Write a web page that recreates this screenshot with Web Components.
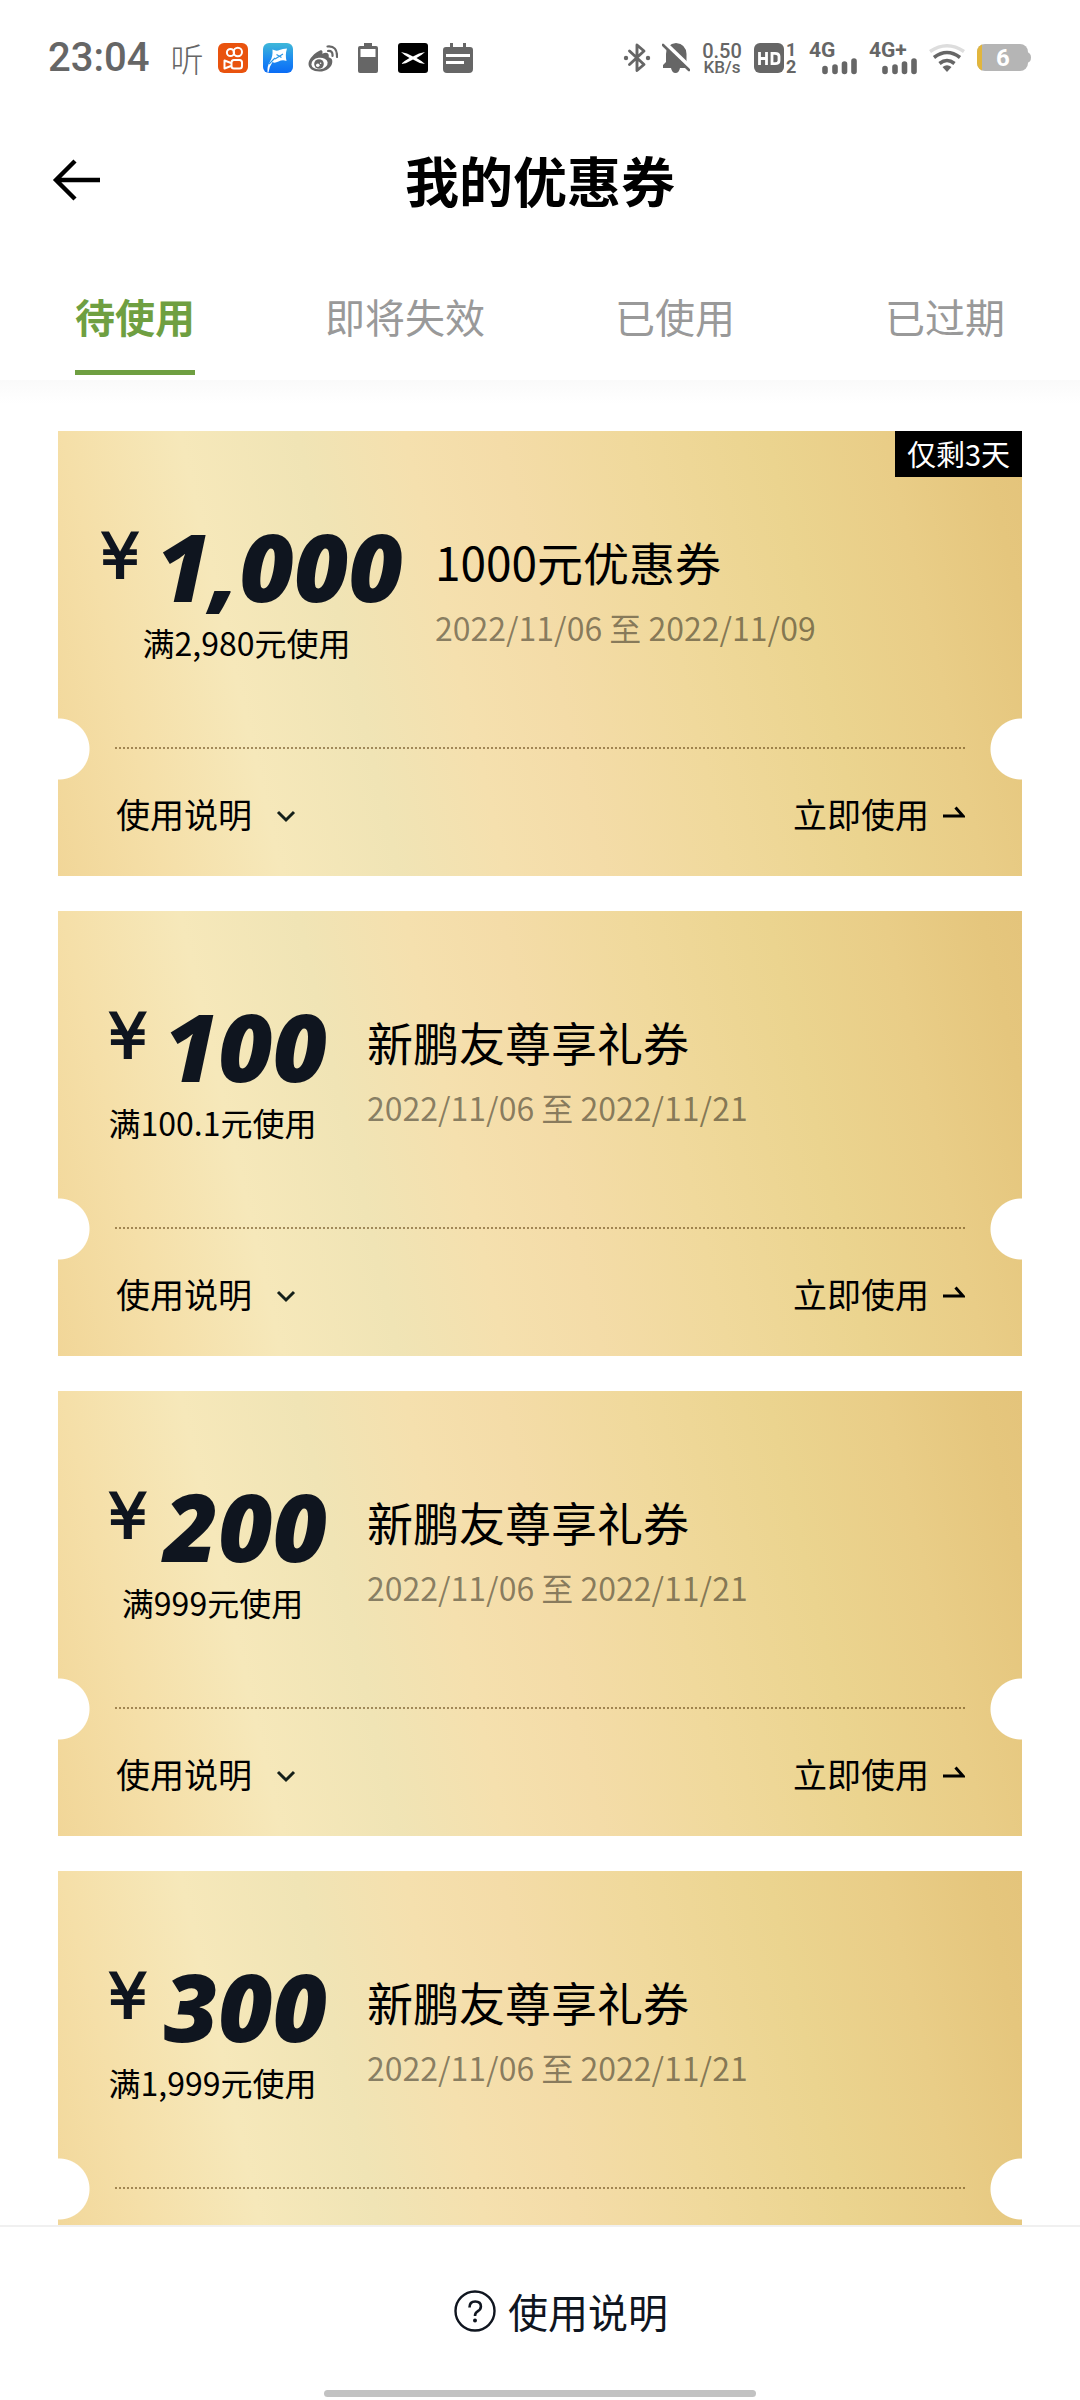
<!DOCTYPE html>
<html lang="zh-CN">
<head>
<meta charset="utf-8">
<meta name="viewport" content="width=device-width, initial-scale=1">
<title>我的优惠券</title>
<style>
  html, body { margin: 0; height: 100%; background: #fff; }
  body { font-family: "Noto Sans CJK SC", "Noto Sans", sans-serif; color: #000; }
</style>
</head>
<body>
<coupon-page>
  <status-bar slot="top"></status-bar>
  <page-header slot="top">我的优惠券</page-header>
  <tab-strip slot="top">
    <tab-item selected>待使用</tab-item>
    <tab-item>即将失效</tab-item>
    <tab-item>已使用</tab-item>
    <tab-item>已过期</tab-item>
  </tab-strip>
  <coupon-card amount="1,000" condition="满2,980元使用" name="1000元优惠券" period="2022/11/06 至 2022/11/09" badge="仅剩3天"></coupon-card>
  <coupon-card amount="100" condition="满100.1元使用" name="新鹏友尊享礼券" period="2022/11/06 至 2022/11/21"></coupon-card>
  <coupon-card amount="200" condition="满999元使用" name="新鹏友尊享礼券" period="2022/11/06 至 2022/11/21"></coupon-card>
  <coupon-card amount="300" condition="满1,999元使用" name="新鹏友尊享礼券" period="2022/11/06 至 2022/11/21"></coupon-card>
  <page-footer slot="bottom">使用说明</page-footer>
</coupon-page>

<script>
const define = (name, html, setup) => {
  const template = document.createElement('template');
  template.innerHTML = html;
  customElements.define(name, class extends HTMLElement {
    constructor() {
      super();
      this.attachShadow({ mode: 'open' }).append(template.content.cloneNode(true));
    }
    connectedCallback() { if (setup) setup(this, this.shadowRoot); }
  });
};

define('coupon-page', `
  <style>
    :host { display: flex; flex-direction: column; height: 100vh; background: #fff; }
    header, footer { flex: none; }
    main { flex: 1; min-height: 0; overflow-y: auto; scrollbar-width: none;
      display: flex; flex-direction: column; gap: 35px; box-sizing: border-box;
      padding: 51px 58px 35px; background: linear-gradient(#fafafa, #fff 24px); }
  </style>
  <header><slot name="top"></slot></header>
  <main><slot></slot></main>
  <footer><slot name="bottom"></slot></footer>
`);

define('status-bar', `
  <style>
    :host { display: flex; align-items: center; justify-content: space-between;
      height: 116px; padding: 0 48px; box-sizing: border-box; color: #666; font-family: Roboto, "Noto Sans CJK SC", sans-serif; }
    svg { display: block; flex: none; }
    .left, .right { display: flex; align-items: center; }
    .left { gap: 15px; }
    .right { gap: 11px; }
    time { font-size: 40px; font-weight: 500; line-height: 40px; margin-right: 6px; }
    .listen { font: 300 33px/30px "Noto Sans CJK SC", sans-serif; }
    .rate { display: flex; flex-direction: column; align-items: center; width: 42px; font: 500 20px/18px Roboto, sans-serif; }
    .rate small { font-size: 17px; line-height: 15px; }
    .sims { display: flex; align-items: center; gap: 2px; width: 44px; font: 700 18px/17px Roboto, sans-serif; }
    .sims div { display: flex; flex-direction: column; align-items: center; }
    .signal { display: flex; flex-direction: column; width: 49px; font: 700 21px/16px Roboto, sans-serif; }
    .signal svg { align-self: flex-end; }
  </style>
  <div class="left">
    <time>23:04</time>
    <span class="listen">听</span>
    <svg width="30" height="30" viewBox="0 0 30 30"><rect width="30" height="30" rx="6" fill="#e9530e"/><g fill="none" stroke="#fff" stroke-width="2"><circle cx="12.500" cy="9.500" r="3.600"/><circle cx="19.800" cy="9" r="4.200"/><rect x="13.500" y="17" width="10.500" height="8.500" rx="2.500"/><path d="M13 20 6.500 17.500v8l6.500-2.500" stroke-linejoin="round"/></g></svg>
    <svg width="30" height="30" viewBox="0 0 30 30"><defs><linearGradient id="b" x1="0" y1="0" x2="0" y2="1"><stop offset="0" stop-color="#3fb8d8"/><stop offset=".6" stop-color="#1a86f2"/><stop offset="1" stop-color="#0a6cf5"/></linearGradient></defs><rect width="30" height="30" rx="6" fill="url(#b)"/><path d="M9.500 6.500q4 2 7 .5t7.500-1.500q-2 6-.5 12.500-4-1.500-8 .5t-6 .5q-3 4-4 10.500H4.500Q4 23 7 18.500 10 14 9.500 6.500Z" fill="#fff"/><path d="M12 16l8-5M13.500 11.500l5 3M6 21l6-6" stroke="#2a97e6" stroke-width="1.200" fill="none"/></svg>
    <svg width="30" height="30" viewBox="0 0 30 30"><path fill="#666" d="M12 7.500c2.200-1 3 .8 2.300 3.200 3-1.300 6.500-1.500 6.500 2.200 0 .8-.5 1.400.5 1.700 2.200.7 3.200 2 3 4.300C24 24 18.500 28.500 11.500 28.500 5 28.500.500 25.500.500 21 .500 16 7 9.500 12 7.500Z"/><ellipse cx="11.500" cy="20.500" rx="8.200" ry="5.800" fill="#fff" transform="rotate(-8 11.500 20.500)"/><circle cx="11" cy="21" r="4.800" fill="#666"/><circle cx="9.800" cy="22.300" r="1.800" fill="#fff"/><circle cx="12.600" cy="20.200" r=".8" fill="#fff"/><path d="M20 8q5-.5 4.500 5M19.500 3.500q10-1 9.500 10.500" fill="none" stroke="#666" stroke-width="2.200" stroke-linecap="round"/></svg>
    <svg width="30" height="30" viewBox="0 0 30 30"><path fill="#666" fill-rule="evenodd" d="M11 0h8v3h4q2 0 2 2v23q0 2-2 2H7q-2 0-2-2V5q0-2 2-2h4ZM7.500 6v8h15V6Z"/></svg>
    <svg width="30" height="30" viewBox="0 0 30 30"><rect width="30" height="30" rx="3"/><path fill="#fff" d="M3 9q6 .5 12 4.500 6-4 12-4.500-3 3-8.500 6 5.500 3 8.500 6-6-.5-12-4.500-6 4-12 4.500 3-3 8.500-6Q6 12 3 9Z"/></svg>
    <svg width="30" height="30" viewBox="0 0 30 30"><path fill="#666" fill-rule="evenodd" d="M7 0h3v4h10V0h3v4h4q3 0 3 3v19q0 4-4 4H4q-4 0-4-4V7q0-3 3-3h4ZM3 11v3h24v-3ZM3 18v3h18v-3Z"/></svg>
  </div>
  <div class="right">
    <svg width="28" height="32" viewBox="0 0 28 32"><path d="M6.500 9 21 22.500 14 28.500V3L21 9 6.500 22.500" fill="none" stroke="#666" stroke-width="2.900" stroke-linejoin="round" stroke-linecap="round"/><circle cx="3" cy="16" r="2.200" fill="#666"/><circle cx="25" cy="16" r="2.200" fill="#666"/></svg>
    <svg width="28" height="32" viewBox="0 0 28 32"><path fill="#666" d="M14 1Q24 2 24.500 12v9l2.500 5H1v-3l3-3v-8Q4.500 2 14 1ZM9 26h9q-1 5-4.500 5T9 26Z"/><path d="M3 1 31 28" stroke="#fff" stroke-width="4"/><path d="M.500-1 30 28" stroke="#fff" stroke-width="2"/><path d="M1 3 27 28" stroke="#666" stroke-width="2.600" stroke-linecap="round"/></svg>
    <span class="rate"><span>0.50</span><small>KB/s</small></span>
    <span class="sims">
      <svg width="30" height="30" viewBox="0 0 30 30"><rect width="30" height="30" rx="6" fill="#666"/><path d="M5.500 9v13M12.500 9v13M5.500 15.500h7M18 10.300v10.400h3q4 0 4-3v-4.400q0-3-4-3Z" fill="none" stroke="#fff" stroke-width="2.800"/></svg>
      <div><span>1</span><span>2</span></div>
    </span>
    <span class="signal"><span>4G</span><svg width="48" height="17" viewBox="0 0 48 17"><path d="M15 10.500v3M25 9v4.500M34.500 6v7.500M44 3v10.500" stroke="#666" stroke-width="5.600" stroke-linecap="round"/></svg></span>
    <span class="signal"><span>4G+</span><svg width="48" height="17" viewBox="0 0 48 17"><path d="M15 10.500v3M25 9v4.500M34.500 6v7.500M44 3v10.500" stroke="#666" stroke-width="5.600" stroke-linecap="round"/></svg></span>
    <svg width="36" height="32" viewBox="0 0 36 32"><g fill="none" stroke="#666" stroke-width="3.600"><path d="M1 9.500Q18-2 35 9.500" stroke="#ddd"/><path d="M5 15.500q13-10 26 0"/><path d="M10.500 21.500q7.500-6 15 0"/></g><path d="M13.500 25q4.500-3.500 9 0L18 30Z" fill="#666"/></svg>
    <svg width="56" height="28" viewBox="0 0 56 28"><defs><clipPath id="c"><rect x="1" width="51" height="27" rx="8"/></clipPath></defs><g clip-path="url(#c)"><rect width="52" height="28" fill="#b5b5b5"/><rect width="6" height="28" fill="#e2b63c"/></g><path d="M51 8q4 1 4 5.500T51 19Z" fill="#b5b5b5"/><text x="27" y="22" text-anchor="middle" font-family="Roboto" font-weight="700" font-size="24" fill="#fff">6</text></svg>
  </div>
`);

define('page-header', `
  <style>
    :host { display: grid; grid-template-columns: 1fr auto 1fr; align-items: center; height: 128px; padding: 0 52px; }
    h1 { margin: 0; font-size: 54px; line-height: 80px; font-weight: 700; }
    button { border: 0; padding: 0; background: none; justify-self: start; }
    svg { display: block; }
  </style>
  <button aria-label="返回"><svg width="50" height="44" viewBox="0 0 50 44"><path d="M48 22H4M23 3 4 22 23 41" fill="none" stroke="#000" stroke-width="4.400"/></svg></button>
  <h1><slot></slot></h1>
`);

define('tab-strip', `
  <style>
    :host { display: flex; height: 136px; align-items: flex-end; }
    ::slotted(*) { flex: 1; }
  </style>
  <slot></slot>
`);

define('tab-item', `
  <style>
    :host { display: flex; justify-content: center; padding-bottom: 5px; }
    button { border: 0; border-bottom: 5px solid transparent; background: none; padding: 0 0 24px;
      font-family: inherit; font-size: 40px; line-height: 60px; color: #999; }
    :host([selected]) button { color: #6f9f41; font-weight: 700; border-color: #6f9f41; }
  </style>
  <button><slot></slot></button>
`);

define('coupon-card', `
  <style>
    :host { display: block; flex: none; position: relative; height: 445px;
      background:
        radial-gradient(circle at 1px 318px, #fff 30px, transparent 31px),
        radial-gradient(circle at calc(100% - 1px) 318px, #fff 30px, transparent 31px),
        linear-gradient(77deg, #f1d698 0%, #f5dfa8 10%, #f6e8ba 21%, #f0e4b5 32%, #f5e0ae 42%, #f4dca8 51%, #f0d99c 63%, #ebd48f 76%, #e9cd87 87%, #e5c67d 96%, #e4c47b 100%); }
    .badge { position: absolute; top: 0; right: 0; padding: 0 12px 2px; background: #000; color: #fff; font-size: 29px; line-height: 44px; }
    .badge:empty { display: none; }
    .info { display: flex; height: 316px; padding-top: 88px; box-sizing: border-box; }
    .value { display: flex; flex-direction: column; align-items: center; min-width: 309px; padding: 0 32px; box-sizing: border-box; }
    .amount { display: flex; gap: 16px; height: 98px; padding-left: 10px; color: #0f151f; }
    .yen { font: 63px/76px "DejaVu Sans", sans-serif; -webkit-text-stroke: 2px #0f151f; }
    .number { font: italic 800 94px/94px "Open Sans", sans-serif; }
    .condition { font-size: 32px; line-height: 50px; }
    h2 { margin: 8px 0 0; font-size: 46px; line-height: 68px; font-weight: 400; }
    .period { margin: 8px 0 0; font-size: 32px; line-height: 48px; color: rgba(0,0,0,.45); }
    .rule { margin: 0 57px; border-top: 2px dotted rgba(80,45,0,.5); }
    .actions { display: flex; justify-content: space-between; align-items: center; padding: 2px 57px 0 58px; height: 127px; box-sizing: border-box; }
    button, a { display: flex; align-items: center; border: 0; padding: 0; background: none; font: 34px/50px "Noto Sans CJK SC", sans-serif; color: #000; text-decoration: none; }
    button { gap: 24px; } a { gap: 14px; }
    svg { display: block; }
  </style>
  <span class="badge"></span>
  <div class="info">
    <div class="value">
      <div class="amount"><span class="yen">¥</span><span class="number"></span></div>
      <div class="condition"></div>
    </div>
    <div>
      <h2></h2>
      <p class="period"></p>
    </div>
  </div>
  <div class="rule"></div>
  <div class="actions">
    <button>使用说明<svg width="20" height="18" viewBox="0 0 20 18"><path d="M2 7l8 8 8-8" fill="none" stroke="#15201a" stroke-width="3"/></svg></button>
    <a href="#use">立即使用<svg width="22" height="18" viewBox="0 0 22 18"><path d="M0 11h20L12.500 2.500" fill="none" stroke="#000" stroke-width="3"/></svg></a>
  </div>
`, (host, root) => {
  const put = (selector, attr) => { root.querySelector(selector).textContent = host.getAttribute(attr) || ''; };
  put('.badge', 'badge');
  put('.number', 'amount');
  put('.condition', 'condition');
  put('h2', 'name');
  put('.period', 'period');
});

define('page-footer', `
  <style>
    :host { display: flex; flex-direction: column; align-items: center; justify-content: space-between;
      height: 175px; padding: 54px 0 3px; box-sizing: border-box; border-top: 2px solid #f0f0f0; background: #fff; }
    button { display: flex; align-items: center; gap: 12px; border: 0; padding: 0 0 0 42px; background: none;
      font-family: inherit; font-size: 40px; line-height: 60px; color: #0f151f; }
    svg { display: block; }
    .home { width: 40%; height: 7px; border-radius: 4px; background: #c2c2c2; }
  </style>
  <button><svg width="42" height="42" viewBox="0 0 42 42"><circle cx="21" cy="21" r="19.500" fill="none" stroke="#0f151f" stroke-width="2.400"/><path d="M15.500 17.500q0-6 5.700-6t5.700 5q0 3-3.500 5-2.400 1.500-2.400 4.500" fill="none" stroke="#0f151f" stroke-width="2.600"/><circle cx="21" cy="30.500" r="2" fill="#0f151f"/></svg><slot></slot></button>
  <div class="home"></div>
`);
</script>
</body>
</html>
